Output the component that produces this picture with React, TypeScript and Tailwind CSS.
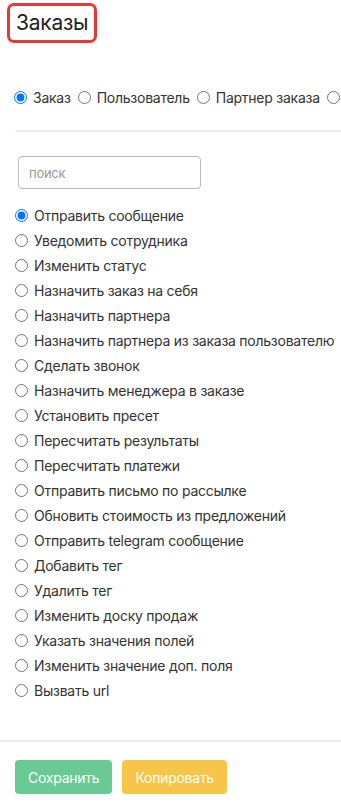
const actions = [
  "Отправить сообщение",
  "Уведомить сотрудника",
  "Изменить статус",
  "Назначить заказ на себя",
  "Назначить партнера",
  "Назначить партнера из заказа пользователю",
  "Сделать звонок",
  "Назначить менеджера в заказе",
  "Установить пресет",
  "Пересчитать результаты",
  "Пересчитать платежи",
  "Отправить письмо по рассылке",
  "Обновить стоимость из предложений",
  "Отправить telegram сообщение",
  "Добавить тег",
  "Удалить тег",
  "Изменить доску продаж",
  "Указать значения полей",
  "Изменить значение доп. поля",
  "Вызвать url",
];

const targets = ["Заказ", "Пользователь", "Партнер заказа", "Сотрудник"];

export default function App() {
  return (
    <div className="h-[812px] w-[341px] overflow-hidden bg-white font-['Inter',sans-serif] tracking-[-0.25px] text-[#333]">
      <div className="px-[7px] pt-[3px]">
        <div className="inline-block rounded-[7px] border-[3px] border-[#e53935] px-[6px] py-[3px] text-[21px] leading-[28px] text-[#222]">
          Заказы
        </div>
      </div>

      <div className="mt-[44px] flex items-center gap-[4px] overflow-hidden whitespace-nowrap pl-[11px] text-[14px]">
        {targets.map((t, i) => (
          <label key={t} className="flex shrink-0 items-center gap-[3px]">
            <input type="radio" name="target" defaultChecked={i === 0} className="m-[3px] h-[13px] w-[13px]" />
            <span>{t}</span>
          </label>
        ))}
      </div>

      <div className="ml-[15px] mt-[22px] border-t-2 border-[#ececec]" />

      <div className="px-[18px] pt-[24px]">
        <input
          type="text"
          placeholder="поиск"
          className="h-[33px] w-[183px] rounded-[4px] border border-[#b8b8c0] px-[10px] text-[13px] outline-none placeholder:text-[#999]"
        />
      </div>

      <div className="mt-[14px] flex flex-col pl-[12px] text-[14px]">
        {actions.map((a, i) => (
          <label key={a} className="flex h-[25px] items-center gap-[3px] whitespace-nowrap">
            <input type="radio" name="action" defaultChecked={i === 0} className="m-[3px] h-[13px] w-[13px]" />
            <span>{a}</span>
          </label>
        ))}
      </div>

      <div className="mt-[37px] border-t-2 border-[#ececec]" />

      <div className="flex gap-[10px] px-[15px] pt-[18px]">
        <button className="h-[34px] rounded-[4px] bg-[#69ca93] px-[13px] text-[14px] text-white">Сохранить</button>
        <button className="h-[34px] rounded-[4px] bg-[#f7c54a] px-[13px] text-[14px] text-white">Копировать</button>
      </div>
    </div>
  );
}
